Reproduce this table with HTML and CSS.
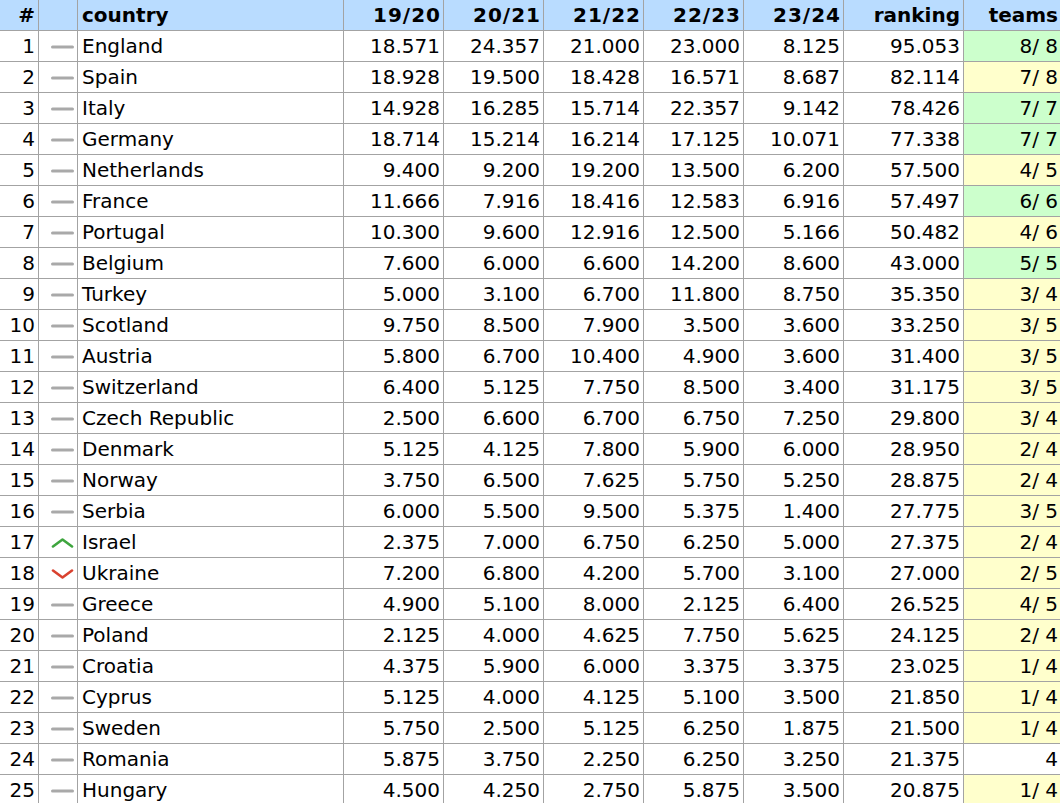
FILE: index.html
```html
<!DOCTYPE html>
<html>
<head>
<meta charset="utf-8">
<link rel="stylesheet" href="styles.css">
</head>
<body>
<table class="rank">
<colgroup>
<col class="c-pos"><col class="c-ico"><col class="c-country"><col class="c-yr"><col class="c-yr"><col class="c-yr"><col class="c-yr"><col class="c-yr"><col class="c-rank"><col class="c-teams">
</colgroup>
<thead>
<tr><th class="r">#</th><th></th><th class="l">country</th><th class="r yr">19/20</th><th class="r yr">20/21</th><th class="r yr">21/22</th><th class="r yr">22/23</th><th class="r yr">23/24</th><th class="r">ranking</th><th class="r">teams</th></tr>
</thead>
<tbody id="rows"></tbody>
</table>
<script src="app.js"></script>
</body>
</html>
```
FILE: app.js
```js
const data = [
["England","=",["18.571","24.357","21.000","23.000","8.125"],"95.053","8/ 8","g"],
["Spain","=",["18.928","19.500","18.428","16.571","8.687"],"82.114","7/ 8","y"],
["Italy","=",["14.928","16.285","15.714","22.357","9.142"],"78.426","7/ 7","g"],
["Germany","=",["18.714","15.214","16.214","17.125","10.071"],"77.338","7/ 7","g"],
["Netherlands","=",["9.400","9.200","19.200","13.500","6.200"],"57.500","4/ 5","y"],
["France","=",["11.666","7.916","18.416","12.583","6.916"],"57.497","6/ 6","g"],
["Portugal","=",["10.300","9.600","12.916","12.500","5.166"],"50.482","4/ 6","y"],
["Belgium","=",["7.600","6.000","6.600","14.200","8.600"],"43.000","5/ 5","g"],
["Turkey","=",["5.000","3.100","6.700","11.800","8.750"],"35.350","3/ 4","y"],
["Scotland","=",["9.750","8.500","7.900","3.500","3.600"],"33.250","3/ 5","y"],
["Austria","=",["5.800","6.700","10.400","4.900","3.600"],"31.400","3/ 5","y"],
["Switzerland","=",["6.400","5.125","7.750","8.500","3.400"],"31.175","3/ 5","y"],
["Czech Republic","=",["2.500","6.600","6.700","6.750","7.250"],"29.800","3/ 4","y"],
["Denmark","=",["5.125","4.125","7.800","5.900","6.000"],"28.950","2/ 4","y"],
["Norway","=",["3.750","6.500","7.625","5.750","5.250"],"28.875","2/ 4","y"],
["Serbia","=",["6.000","5.500","9.500","5.375","1.400"],"27.775","3/ 5","y"],
["Israel","up",["2.375","7.000","6.750","6.250","5.000"],"27.375","2/ 4","y"],
["Ukraine","down",["7.200","6.800","4.200","5.700","3.100"],"27.000","2/ 5","y"],
["Greece","=",["4.900","5.100","8.000","2.125","6.400"],"26.525","4/ 5","y"],
["Poland","=",["2.125","4.000","4.625","7.750","5.625"],"24.125","2/ 4","y"],
["Croatia","=",["4.375","5.900","6.000","3.375","3.375"],"23.025","1/ 4","y"],
["Cyprus","=",["5.125","4.000","4.125","5.100","3.500"],"21.850","1/ 4","y"],
["Sweden","=",["5.750","2.500","5.125","6.250","1.875"],"21.500","1/ 4","y"],
["Romania","=",["5.875","3.750","2.250","6.250","3.250"],"21.375","4","w"],
["Hungary","=",["4.500","4.250","2.750","5.875","3.500"],"20.875","1/ 4","y"]
];
const icons = {
  "=": '<svg class="ico" width="23" height="10" viewBox="0 0 23 10"><line x1="1.5" y1="5" x2="21.5" y2="5" stroke="#a9a9a9" stroke-width="3" stroke-linecap="round"/></svg>',
  "up": '<svg class="ico" width="23" height="10" viewBox="0 0 23 10"><polyline points="2,8.5 11.5,1.5 21,8.5" fill="none" stroke="#3ea53e" stroke-width="2.6" stroke-linecap="round" stroke-linejoin="round"/></svg>',
  "down": '<svg class="ico" width="23" height="10" viewBox="0 0 23 10"><polyline points="2,1.5 11.5,8.5 21,1.5" fill="none" stroke="#d9412f" stroke-width="2.6" stroke-linecap="round" stroke-linejoin="round"/></svg>'
};
const tb = document.getElementById("rows");
tb.innerHTML = data.map((d, i) =>
  `<tr><td class="r">${i+1}</td><td class="r icell">${icons[d[1]]}</td><td class="l">${d[0]}</td>` +
  d[2].map(v => `<td class="r">${v}</td>`).join("") +
  `<td class="r">${d[3]}</td><td class="r t-${d[5]}">${d[4]}</td></tr>`
).join("");
```
FILE: styles.css
```css
html, body { margin: 0; padding: 0; background: #fff; }
body { overflow: hidden; }
.rank {
  border-collapse: collapse;
  table-layout: fixed;
  width: 1062px;
  margin: -1px 0 0 -1px;
  font-family: "DejaVu Sans", Verdana, sans-serif;
  font-size: 20px;
  color: #000;
}
.c-pos { width: 39px; }
.c-ico { width: 39px; }
.c-country { width: 266px; }
.c-yr { width: 100px; }
.c-rank { width: 120px; }
.c-teams { width: 98px; }
.rank th, .rank td {
  border: 1px solid #a3a3a3;
  height: 30px;
  line-height: 29px;
  padding: 1px 3px 0 4px;
  box-sizing: border-box;
  white-space: nowrap;
  overflow: hidden;
}
.rank th { background: #b9dcff; font-weight: bold; }
.rank th.yr { letter-spacing: 1px; padding-right: 2px; }
.r { text-align: right; }
.l { text-align: left; }
.icell { padding-right: 3px; }
.ico { display: inline-block; vertical-align: middle; position: relative; top: -1px; }
.t-g { background: #ccffcc; }
.t-y { background: #ffffcc; }
.t-w { background: #fff; }
```
